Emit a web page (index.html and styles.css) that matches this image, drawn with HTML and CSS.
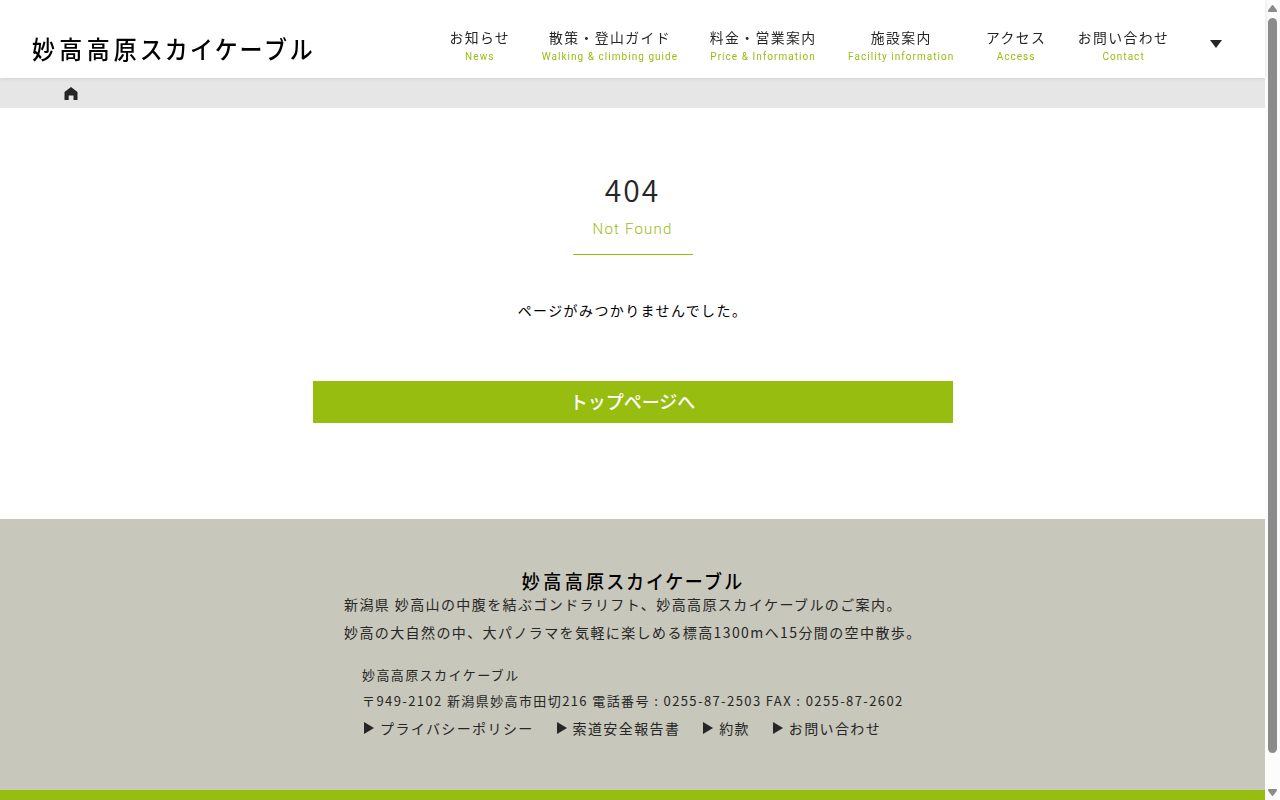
FILE: index.html
```html
<!DOCTYPE html>
<html lang="ja">
<head>
<meta charset="utf-8">
<title>404 | 妙高高原スカイケーブル</title>
<link rel="stylesheet" href="styles.css">
</head>
<body>
<div class="page">
  <header class="header">
    <svg class="logo" viewBox="0 0 284 30" role="img"><g transform="scale(.92 1)"><text y="25" x="13.6 43.2 73 102.5 130.7 157.8 185.4 212.2 239.2 265.7 293.7">妙高高原スカイケーブル</text></g></svg>
    <nav class="nav">
      <a class="item"><span>お知らせ</span><small>News</small></a>
      <a class="item"><span>散策・登山ガイド</span><small>Walking &amp; climbing guide</small></a>
      <a class="item"><span>料金・営業案内</span><small>Price &amp; Information</small></a>
      <a class="item"><span>施設案内</span><small>Facility information</small></a>
      <a class="item"><span>アクセス</span><small>Access</small></a>
      <a class="item"><span>お問い合わせ</span><small>Contact</small></a>
    </nav>
    <svg class="more" viewBox="0 0 12 8"><path d="M0 0h12L6 8z"/></svg>
  </header>
  <div class="crumbs"><svg class="home" viewBox="0 0 14 13"><path d="M7 0L13.5 5V13H9.5V8.5H4.7V13H.5V5z"/></svg></div>
  <main class="main">
    <h1 class="title">404</h1>
    <p class="subtitle">Not Found</p>
    <p class="message">ページがみつかりませんでした。</p>
    <a class="button">トップページへ</a>
  </main>
  <footer class="footer">
    <svg class="logo logo-small" viewBox="0 0 284 30" role="img"><g transform="scale(.92 1)"><text y="25" x="13.6 43.2 73 102.5 130.7 157.8 185.4 212.2 239.2 265.7 293.7">妙高高原スカイケーブル</text></g></svg>
    <p class="lead">新潟県 妙高山の中腹を結ぶゴンドラリフト、妙高高原スカイケーブルのご案内。<br>妙高の大自然の中、大パノラマを気軽に楽しめる標高1300mへ15分間の空中散歩。</p>
    <div class="info">
      <p class="address">妙高高原スカイケーブル<br>〒949-2102 新潟県妙高市田切216 電話番号 : 0255-87-2503 FAX : 0255-87-2602</p>
      <div class="links">
        <a class="link"><svg class="arrow" viewBox="0 0 10 12"><path d="M0 0L10 6L0 12z"/></svg>プライバシーポリシー</a>
        <a class="link"><svg class="arrow" viewBox="0 0 10 12"><path d="M0 0L10 6L0 12z"/></svg>索道安全報告書</a>
        <a class="link"><svg class="arrow" viewBox="0 0 10 12"><path d="M0 0L10 6L0 12z"/></svg>約款</a>
        <a class="link"><svg class="arrow" viewBox="0 0 10 12"><path d="M0 0L10 6L0 12z"/></svg>お問い合わせ</a>
      </div>
    </div>
  </footer>
  <div class="bottom"></div>
</div>
<div class="scrollbar">
  <svg class="tip" viewBox="0 0 9 7"><path d="M3.5 .7Q4.5-.5 5.5.7L8.7 5Q9.5 7 8 7H1Q-.5 7 .3 5z"/></svg>
  <div class="thumb"></div>
  <svg class="tip tip-down" viewBox="0 0 9 7"><path d="M3.5 .7Q4.5-.5 5.5.7L8.7 5Q9.5 7 8 7H1Q-.5 7 .3 5z"/></svg>
</div>
</body>
</html>
```

FILE: styles.css
```css
* { box-sizing: border-box; }
body {
  margin: 0;
  height: 800px;
  display: grid;
  grid-template-columns: 1265px 15px;
  overflow: hidden;
  font: 14px/28px "Noto Sans CJK JP", sans-serif;
  letter-spacing: 1.4px;
  color: #262626;
  background: #fff;
}
p, h1 { margin: 0; font-weight: 400; }
svg { display: block; flex: none; }
.page { display: flex; flex-direction: column; height: 800px; }
.header {
  height: 78px;
  display: flex;
  align-items: flex-start;
  padding-left: 31px;
  background: #fff;
  box-shadow: 0 0 5px rgba(0, 0, 0, .12);
  will-change: transform;
  z-index: 1;
}
.logo { width: 284px; height: 30px; margin-top: 34px; fill: #000; overflow: visible; }
.logo text { font-size: 25px; font-weight: 500; letter-spacing: 0; text-anchor: middle; }
.nav { display: flex; gap: 31.6px; margin: 27px 0 0 134.4px; }
.item { display: flex; flex-direction: column; align-items: center; white-space: nowrap; }
.item span { font-size: 13.86px; line-height: 21px; letter-spacing: 1.39px; }
.item small { font: 10px/17px Roboto, sans-serif; letter-spacing: 1.04px; color: #98bd11; }
.more { width: 12px; height: 8px; margin: 40px 0 0 41px; fill: #262626; }
.crumbs { height: 30px; padding: 9px 0 0 63.5px; background: #e6e6e6; }
.home { width: 14px; height: 13px; fill: #262626; }
.main { height: 411px; display: flex; flex-direction: column; align-items: center; padding-top: 57px; }
.title { font-size: 30px; font-weight: 350; line-height: 48px; letter-spacing: 2px; }
.subtitle {
  width: 120px;
  height: 42px;
  padding-top: 2px;
  border-bottom: 1px solid #98bd11;
  font: 300 15px/28px Roboto, sans-serif;
  letter-spacing: 1.2px;
  text-align: center;
  color: #98bd11;
}
.message { margin-top: 41px; color: #000; }
.button {
  width: 640px;
  height: 42px;
  margin-top: 57px;
  background: #98bd11;
  color: #fff;
  font-size: 18px;
  font-weight: 500;
  line-height: 41px;
  letter-spacing: 0;
  text-align: center;
}
.footer { height: 271px; display: flex; flex-direction: column; align-items: center; padding-top: 50px; background: #c8c7bb; }
.logo-small { width: 223px; height: 24px; margin-top: 0; }
.lead { width: 577px; margin-top: -3px; white-space: nowrap; }
.info { width: 541px; margin-top: 16px; white-space: nowrap; }
.address { font-size: 13px; line-height: 26px; letter-spacing: 1.4px; }
.links { display: flex; gap: 22.8px; margin: 0 0 0 2px; }
.link { display: flex; align-items: center; gap: 6px; }
.arrow { width: 10px; height: 12px; fill: #262626; }
.bottom { height: 10px; background: #98bd11; }
.scrollbar { display: flex; flex-direction: column; align-items: center; padding: 5px 0 4px; background: #fcfcfc; }
.tip { width: 9px; height: 7px; fill: #8b8b8b; }
.tip-down { margin-top: auto; transform: rotate(180deg); }
.thumb { width: 9px; height: 735px; margin-top: 6px; border-radius: 5px; background: #8b8b8b; }
```
